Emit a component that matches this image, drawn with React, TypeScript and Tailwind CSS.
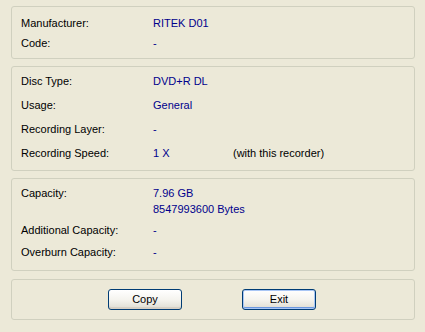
const font = { fontFamily: '"Liberation Sans", Arial, sans-serif' };

function Row({ label, value, extra, h = "h-6" }: { label: string; value: string; extra?: string; h?: string }) {
  return (
    <div className={`flex items-center ${h}`}>
      <div className="w-[132px] shrink-0 text-black">{label}</div>
      <div className="w-[80px] shrink-0 text-[#00008c]">{value}</div>
      {extra && <div className="text-black">{extra}</div>}
    </div>
  );
}

function Group({ className, children }: { className: string; children: React.ReactNode }) {
  return (
    <div className={`rounded-[3px] border border-[#d0d0bf] ${className}`}>{children}</div>
  );
}

export default function App() {
  return (
    <div
      className="w-[425px] h-[332px] bg-[#ece9d8] pt-[6px] pl-[11px] text-[11px] leading-none"
      style={font}
    >
      <div className="flex w-[404px] flex-col gap-[7px]">
        <Group className="h-[53px] pl-[9px] pt-[6px]">
          <Row label="Manufacturer:" value="RITEK D01" h="h-5" />
          <Row label="Code:" value="-" h="h-5" />
        </Group>

        <Group className="h-[105px] pl-[9px] pt-[2px]">
          <Row label="Disc Type:" value="DVD+R DL" />
          <Row label="Usage:" value="General" />
          <Row label="Recording Layer:" value="-" />
          <Row label="Recording Speed:" value="1 X" extra="(with this recorder)" />
        </Group>

        <Group className="h-[93px] pl-[9px] pt-[6px]">
          <div className="flex">
            <div className="w-[132px] shrink-0 h-4 flex items-center">Capacity:</div>
            <div className="text-[#00008c]">
              <div className="h-4 flex items-center">7.96 GB</div>
              <div className="h-4 flex items-center">8547993600 Bytes</div>
            </div>
          </div>
          <div className="mt-[2px]">
            <Row label="Additional Capacity:" value="-" h="h-[22px]" />
            <Row label="Overburn Capacity:" value="-" h="h-[22px]" />
          </div>
        </Group>

        <div className="mt-px">
          <Group className="h-[41px] flex items-center justify-center gap-[60px] pr-[2px]">
            <button
              className="h-[21px] w-[74px] rounded-[3px] border border-[#003c74] bg-gradient-to-b from-white via-[#f5f4ef] to-[#dedcd2] text-[11px] text-black shadow-[inset_0_-2px_0_#d6d0c5]"
              style={font}
            >
              Copy
            </button>
            <button
              className="h-[21px] w-[74px] rounded-[3px] border border-[#003c74] bg-gradient-to-b from-white via-[#f5f4ef] to-[#dedcd2] text-[11px] text-black shadow-[inset_0_0_0_1px_#a8c6f5,inset_0_-2px_0_#6b97e0]"
              style={font}
            >
              Exit
            </button>
          </Group>
        </div>
      </div>
    </div>
  );
}
